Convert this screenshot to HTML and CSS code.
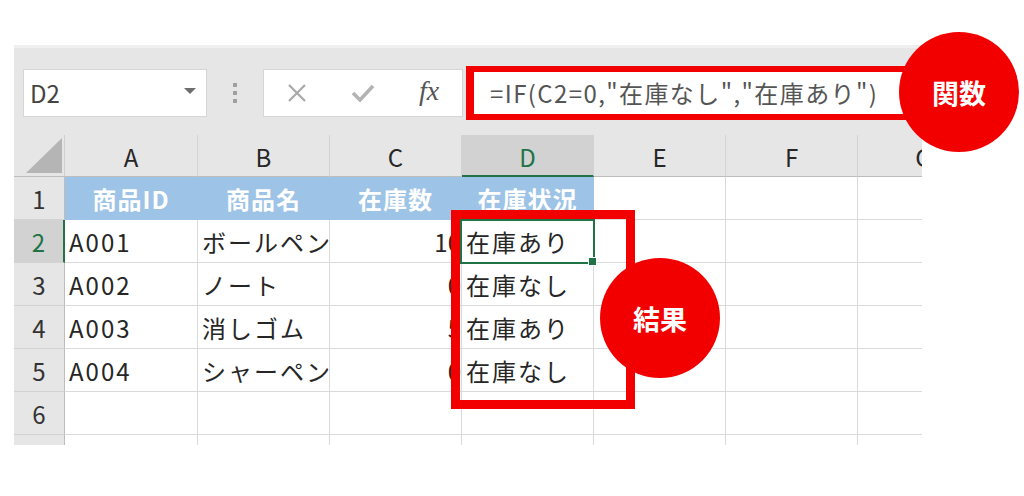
FILE: index.html
```html
<!DOCTYPE html>
<html lang="ja">
<head>
    <meta charset="UTF-8">
    <meta name="viewport" content="width=device-width, initial-scale=1.0">
    <title>IF関数の例</title>
    <link rel="stylesheet" href="styles.css">
</head>
<body>
    <div class="sheet">
        <!-- 数式バー -->
        <div class="toolbar">
            <div class="name-box">
                <span>D2</span>
                <span class="caret"></span>
            </div>
            <div class="grip"><i></i><i></i><i></i></div>
            <div class="fx-buttons">
                <span class="btn">
                    <svg width="20" height="20" viewBox="0 0 20 20"><path d="M2 2 L18 18 M18 2 L2 18" stroke="#a9a9a9" stroke-width="2.2" fill="none"/></svg>
                </span>
                <span class="btn">
                    <svg width="24" height="20" viewBox="0 0 24 20"><path d="M2 10 L9 17 L22 3" stroke="#b3b3b3" stroke-width="3.6" fill="none"/></svg>
                </span>
                <span class="btn fx">fx</span>
            </div>
            <div class="formula">=IF(C2=0,"在庫なし","在庫あり")</div>
        </div>

        <!-- セル -->
        <div class="grid">
            <div class="corner"></div>
            <div class="col-head">A</div>
            <div class="col-head">B</div>
            <div class="col-head">C</div>
            <div class="col-head active">D</div>
            <div class="col-head">E</div>
            <div class="col-head">F</div>
            <div class="col-head">G</div>

            <div class="row-head">1</div>
            <div class="cell title">商品ID</div>
            <div class="cell title">商品名</div>
            <div class="cell title">在庫数</div>
            <div class="cell title">在庫状況</div>
            <div class="cell"></div>
            <div class="cell"></div>
            <div class="cell"></div>

            <div class="row-head active">2</div>
            <div class="cell">A001</div>
            <div class="cell">ボールペン</div>
            <div class="cell num">10</div>
            <div class="cell selected">在庫あり</div>
            <div class="cell"></div>
            <div class="cell"></div>
            <div class="cell"></div>

            <div class="row-head">3</div>
            <div class="cell">A002</div>
            <div class="cell">ノート</div>
            <div class="cell num">0</div>
            <div class="cell">在庫なし</div>
            <div class="cell"></div>
            <div class="cell"></div>
            <div class="cell"></div>

            <div class="row-head">4</div>
            <div class="cell">A003</div>
            <div class="cell">消しゴム</div>
            <div class="cell num">5</div>
            <div class="cell">在庫あり</div>
            <div class="cell"></div>
            <div class="cell"></div>
            <div class="cell"></div>

            <div class="row-head">5</div>
            <div class="cell">A004</div>
            <div class="cell">シャーペン</div>
            <div class="cell num">0</div>
            <div class="cell">在庫なし</div>
            <div class="cell"></div>
            <div class="cell"></div>
            <div class="cell"></div>

            <div class="row-head">6</div>
            <div class="cell"></div>
            <div class="cell"></div>
            <div class="cell"></div>
            <div class="cell"></div>
            <div class="cell"></div>
            <div class="cell"></div>
            <div class="cell"></div>

            <div class="row-head"></div>
            <div class="cell"></div>
            <div class="cell"></div>
            <div class="cell"></div>
            <div class="cell"></div>
            <div class="cell"></div>
            <div class="cell"></div>
            <div class="cell"></div>
        </div>

        <!-- 注釈 -->
        <div class="mark-box"></div>
        <div class="badge badge-func">関数</div>
        <div class="badge badge-result">結果</div>
    </div>
</body>
</html>
```

FILE: styles.css
```css
body {
    margin: 0;
    background: #fff;
    font-family: "Noto Sans CJK JP", "Noto Sans", sans-serif;
    color: #262626;
}

.sheet {
    position: relative;
    width: 908px;
    margin: 45px 0 0 14px;
    background: #e6e6e6;
}

.toolbar {
    display: flex;
    align-items: center;
    height: 90px;
    box-sizing: border-box;
    padding: 19px 10px 17px 9px;
    border-top: 3px solid #efefef;
}

.name-box {
    display: flex;
    align-items: center;
    justify-content: space-between;
    width: 184px;
    height: 48px;
    box-sizing: border-box;
    padding: 0 10px 0 6px;
    background: #fff;
    border: 1px solid #d6d6d6;
    font-size: 24px;
    color: #444;
}

.caret {
    width: 0;
    height: 0;
    border-left: 6px solid transparent;
    border-right: 6px solid transparent;
    border-top: 6px solid #6e6e6e;
    margin-top: -4px;
}

.grip {
    width: 56px;
    display: flex;
    flex-direction: column;
    align-items: center;
    gap: 4px;
}

.grip i {
    width: 4px;
    height: 4px;
    background: #a0a0a0;
}

.fx-buttons {
    display: flex;
    width: 200px;
    height: 48px;
    box-sizing: border-box;
    background: #fff;
    border: 1px solid #d6d6d6;
    margin-right: 3px;
}

.btn {
    width: 66px;
    display: flex;
    align-items: center;
    justify-content: center;
}

.fx {
    font-family: "Liberation Serif", "DejaVu Serif", serif;
    font-style: italic;
    font-size: 28px;
    color: #555;
    padding-bottom: 4px;
}

.formula {
    flex: 1;
    height: 54px;
    box-sizing: border-box;
    border: 7px solid #f20000;
    border-width: 6px 8px;
    background: #fff;
    padding-left: 16px;
    display: flex;
    align-items: center;
    font-size: 24px;
    letter-spacing: 1.4px;
    color: #555;
    white-space: nowrap;
    overflow: hidden;
}

/* 表 */
.grid {
    display: grid;
    grid-template-columns: 51px 133px repeat(6, 132px);
    grid-template-rows: 42px repeat(7, 43px);
    height: 310px;
    overflow: hidden;
}

.corner,
.col-head,
.row-head,
.cell {
    box-sizing: border-box;
    display: flex;
    align-items: center;
    white-space: nowrap;
    overflow: hidden;
}

.corner {
    position: relative;
    border-right: 1px solid #cfcfcf;
    border-bottom: 1px solid #bdbdbd;
}

.corner::after {
    content: "";
    position: absolute;
    right: 2px;
    bottom: 3px;
    width: 0;
    height: 0;
    border-left: 36px solid transparent;
    border-bottom: 35px solid #b5b5b5;
}

.col-head {
    justify-content: center;
    font-size: 24px;
    border-right: 1px solid #d3d3d3;
    border-bottom: 1px solid #bdbdbd;
    padding-top: 2px;
}

.col-head.active {
    background: #d2d2d2;
    color: #217346;
    border-bottom: 2px solid #217346;
}

.row-head {
    justify-content: center;
    font-size: 24px;
    color: #333;
    border-right: 1px solid #bdbdbd;
    border-bottom: 1px solid #d3d3d3;
}

.row-head.active {
    background: #d2d2d2;
    color: #217346;
    border-right: 2px solid #217346;
}

.cell {
    background: #fff;
    font-size: 24px;
    letter-spacing: 2px;
    padding: 0 4px;
    border-right: 1px solid #dadada;
    border-bottom: 1px solid #dadada;
}

.cell.title {
    justify-content: center;
    background: #9dc3e6;
    border-color: #9dc3e6;
    color: #fff;
    font-weight: bold;
    letter-spacing: 1px;
}

.cell.num {
    justify-content: flex-end;
    padding-right: 0;
    letter-spacing: 0;
}

.cell.selected {
    position: relative;
    overflow: visible;
}

.cell.selected::after {
    content: "";
    position: absolute;
    left: -2px;
    top: -1px;
    right: -2px;
    bottom: -2px;
    border: 2px solid #217346;
}

.cell.selected::before {
    content: "";
    position: absolute;
    right: -4px;
    bottom: -4px;
    width: 7px;
    height: 7px;
    background: #217346;
    border: 1px solid #fff;
    z-index: 1;
}

/* 赤い枠と丸 */
.mark-box {
    position: absolute;
    left: 437px;
    top: 165px;
    width: 184px;
    height: 199px;
    box-sizing: border-box;
    border: 9px solid #f20000;
}

.badge {
    position: absolute;
    width: 120px;
    height: 120px;
    border-radius: 50%;
    background: #f20000;
    color: #fff;
    font-weight: bold;
    font-size: 27px;
    display: flex;
    align-items: center;
    justify-content: center;
}

.badge-func {
    left: 885px;
    top: -13px;
}

.badge-result {
    left: 586px;
    top: 213px;
}
```
